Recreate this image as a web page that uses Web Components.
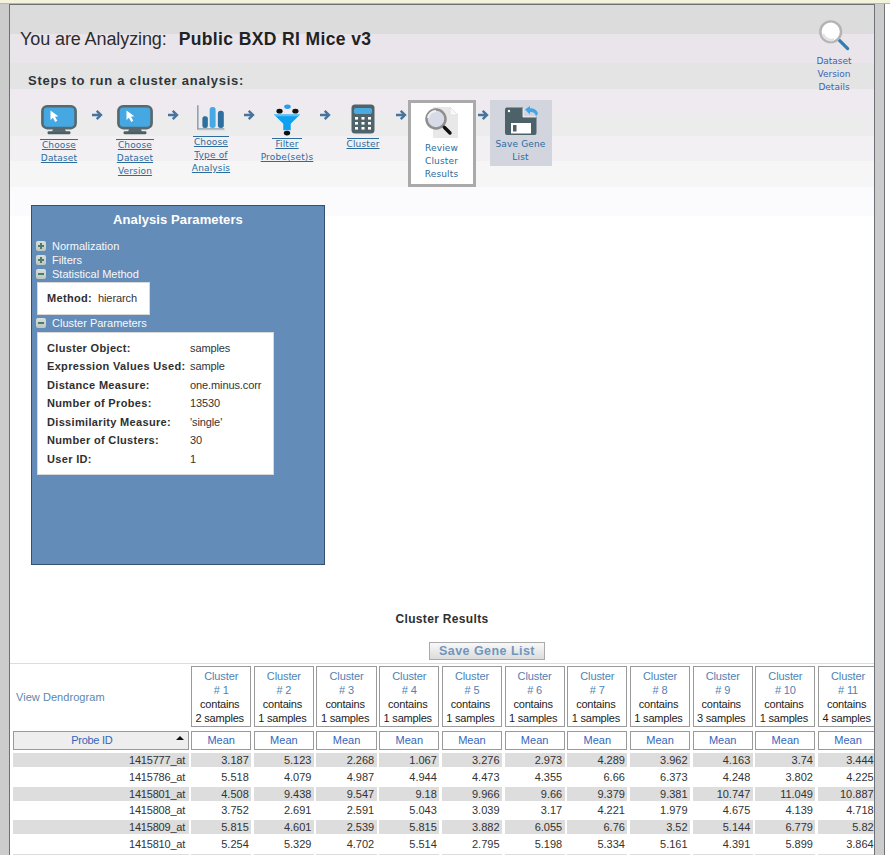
<!DOCTYPE html>
<html><head><meta charset="utf-8"><title>Cluster analysis</title>
<style>
html,body{margin:0;padding:0;background:#fff;}
body{font-family:"Liberation Sans",Arial,sans-serif;width:890px;height:855px;overflow:hidden;}
</style></head>
<body>
<x-app>
  <x-head slot="head"></x-head>
  <x-panel slot="panel" title-text="Analysis Parameters"></x-panel>
  <x-results slot="results"></x-results>
</x-app>

<script>
const ICONS = {
monitor:`<svg width="36" height="32" viewBox="0 0 38 32"><rect x="1.5" y="1.5" width="35" height="23" rx="5" fill="#46a8e2" stroke="#56696f" stroke-width="2.8"/><path d="M10 6l0 10 2.6-2.4 2.4 4.4 2.2-1.2-2.4-4.2 3.5-.6z" fill="#fff"/><path d="M13 25h12l1.5 3.5h-15z" fill="#56696f"/><rect x="7" y="28" width="24" height="3" rx="1" fill="#4c5f66"/></svg>`,
chart:`<svg width="31" height="30" viewBox="0 0 34 30"><path d="M2 1v26h29" fill="none" stroke="#8b9ba8" stroke-width="1.6"/><path d="M2.5 28h29" stroke="#c6ced4" stroke-width="1"/><rect x="7" y="13" width="6" height="13" rx="2.5" fill="#2e6f9f"/><rect x="15" y="3" width="6.5" height="23" rx="3" fill="#47a9e4"/><rect x="24" y="7" width="6.5" height="19" rx="3" fill="#2e6f9f"/></svg>`,
funnel:`<svg width="28" height="34" viewBox="0 0 30 34"><ellipse cx="15.500" cy="2.800" rx="3.500" ry="2.300" fill="#2b9bef"/><ellipse cx="7" cy="7.500" rx="3.300" ry="2.600" fill="#111"/><ellipse cx="24" cy="7.500" rx="3.300" ry="2.600" fill="#111"/><path d="M1 11h28l-10 10v7h-8v-7z" fill="#10a0f2"/><path d="M1 11h28l-2 2H3z" fill="#5cc0f6"/><ellipse cx="15" cy="31" rx="3.400" ry="2.600" fill="#111"/></svg>`,
calc:`<svg width="24" height="30" viewBox="0 0 24 30"><rect x=".5" y=".5" width="23" height="29" rx="3.500" fill="#50636a"/><rect x="3" y="4" width="18" height="6" rx="2" fill="#4aaae2"/><g fill="#fff"><rect x="4" y="13" width="3" height="2.600"/><rect x="10.500" y="13" width="3" height="2.600"/><rect x="17" y="13" width="3" height="2.600"/><rect x="4" y="18" width="3" height="2.600"/><rect x="10.500" y="18" width="3" height="2.600"/><rect x="17" y="18" width="3" height="2.600"/><rect x="4" y="23" width="3" height="2.600"/><rect x="10.500" y="23" width="3" height="2.600"/><rect x="17" y="23" width="3" height="2.600"/></g></svg>`,
review:`<svg width="36" height="33" viewBox="0 0 36 33"><path d="M9 1h17l8 8v23H9z" fill="#e8e8e8"/><path d="M26 1l8 8h-8z" fill="#f8f8f8" stroke="#d8d8d8" stroke-width=".6"/><circle cx="12" cy="13" r="9.500" fill="#d7dbe8" stroke="#8f8f8f" stroke-width="2.500"/><path d="M4 12a8 8 0 0 1 8-7" fill="none" stroke="#f2f2f2" stroke-width="2"/><path d="M19 20l7 7" stroke="#5d5d5d" stroke-width="2.500"/><path d="M20.500 21.500l5.500 5.500" stroke="#111" stroke-width="3.400" stroke-linecap="round"/></svg>`,
save:`<svg width="34" height="31" viewBox="0 0 34 31"><path d="M1 4.500a2 2 0 0 1 2-2h16v9.500h13.500v16a2 2 0 0 1-2 2H3a2 2 0 0 1-2-2z" fill="#4d6169"/><circle cx="5" cy="6" r="1.200" fill="#fff"/><rect x="7" y="18" width="20" height="10.500" fill="#fff"/><rect x="9" y="20" width="3.500" height="6.500" fill="#4d6169"/><path d="M21 4.500l5-3.500v2.200c4 .1 7 1.700 8 5.300l-2 3c-.5-3-2.500-4.500-6-4.400v2.300z" fill="#42a5e6"/><path d="M19 3v9h13" fill="none" stroke="#fff" stroke-width=".8"/></svg>`,
lens:`<svg width="32" height="32" viewBox="0 0 34 34"><path d="M21 21l10 10" stroke="#8b8b8b" stroke-width="2"/><path d="M22.500 22.500l9 9" stroke="#2f7fb2" stroke-width="3.400" stroke-linecap="round"/><circle cx="13.500" cy="13.500" r="11" fill="#fff" stroke="#b4b4b4" stroke-width="2.600"/><path d="M5 16a10 10 0 0 0 12 6" fill="none" stroke="#e2e2e2" stroke-width="3"/></svg>`,
arrow:`<svg width="12" height="12" viewBox="0 0 12 12"><path d="M1 6h8M5.700 1.800L10 6l-4.300 4.200" fill="none" stroke="#47749f" stroke-width="2.400"/></svg>`
};

class Base extends HTMLElement{
  render(html){ if(!this.shadowRoot) this.attachShadow({mode:'open'}); this.shadowRoot.innerHTML = html; }
}

customElements.define('x-app', class extends Base{
  connectedCallback(){ this.render(`<style>
    :host{display:block;width:890px;height:855px;overflow:hidden;background:#fff;}
    .top{height:3px;background:#f3f3dc;border-bottom:1px solid #b9b9a0;}
    .frame{display:flex;width:885px;height:851px;background:#cccccc;border-right:1px solid #70767a;box-sizing:border-box;padding:0 9px;}
    .main{flex:1;min-width:0;border-left:1px solid #6b7176;border-right:1px solid #6b7176;border-top:1px solid #6b7176;overflow:hidden;
      background:linear-gradient(#dcdcdc 0 29px,#e9e5eb 29px 58px,#e4e4e4 58px 84px,#eeeaf0 84px 109px,#ececec 109px 131px,#f3f0f4 131px 156px,#f6f6f6 156px 182px,#fbfafd 182px 211px,#fff 211px);}
    </style>
    <div class="top"></div>
    <div class="frame"><div class="main"><slot name="head"></slot><slot name="panel"></slot><slot name="results"></slot></div></div>`); }
});

customElements.define('x-step', class extends Base{
  connectedCallback(){
    const lines=(this.getAttribute('label')||'').split('|');
    const plain=this.hasAttribute('plain');
    this.render(`<style>
      :host{display:flex;flex-direction:column;align-items:center;box-sizing:border-box;width:var(--w,56px);padding-top:var(--pt,4px);}
      .ic{display:block;height:var(--ih,32px);}
      svg{display:block;}
      .ln{margin-top:var(--gap,3px);width:var(--lw,38px);height:1px;background:#2a6c9e;}
      .lb{margin-top:${plain?'var(--gap,3px)':'-1px'};text-align:center;font-family:"DejaVu Sans",Verdana,sans-serif;font-size:9px;line-height:13px;letter-spacing:.15px;color:#2a6c9e;white-space:nowrap;}
      a{color:inherit;${plain?'text-decoration:none;':'text-decoration:underline;'}}
    </style><div class="ic">${ICONS[this.getAttribute('icon')]}</div>${plain?'':'<div class="ln"></div>'}<div class="lb">${lines.map(l=>`<a href="#">${l}</a>`).join('<br>')}</div>`);
  }
});

customElements.define('x-arrow', class extends Base{
  connectedCallback(){ this.render(`<style>:host{display:flex;justify-content:center;width:var(--w,20px);padding:9px 0 0 var(--pl,0);box-sizing:border-box;}svg{display:block;}</style>${ICONS.arrow}`); }
});

customElements.define('x-head', class extends Base{
  connectedCallback(){ this.render(`<style>
    :host{display:block;height:200px;position:relative;color:#222;}
    .bar{display:flex;justify-content:space-between;}
    .left{padding:23px 0 0 10px;}
    h1{margin:0;font-size:18px;line-height:22px;font-weight:400;color:#2c2c2c;display:flex;letter-spacing:-.1px;}
    h1 b{margin-left:12px;letter-spacing:.38px;font-size:17.500px;color:#222;}
    h2{margin:23px 0 0 8px;font-size:13px;line-height:16px;font-weight:700;letter-spacing:.75px;color:#2f3438;}
    .steps{display:flex;align-items:flex-start;margin:11px 0 0 11px;}
    .review{--w:68px;--pt:3px;--gap:3px;border:3px solid #aaa;background:#fff;height:87px;box-sizing:border-box;--ih:33px;}
    .review,.save{flex:none;}
    .save{--w:62px;--pt:5px;--gap:2px;--ih:31px;background:#d2d4de;height:66px;}
    .dd{margin:14px 10px 0 0;width:60px;display:flex;flex-direction:column;align-items:center;font-family:"DejaVu Sans",Verdana,sans-serif;font-size:9px;line-height:13px;text-align:center;color:#3f62b5;}
    .dd svg{display:block;margin-bottom:4px;}
  </style>
  <div class="bar">
    <div class="left">
      <h1><span>You are Analyzing:</span><b>Public BXD RI Mice v3</b></h1>
      <h2>Steps to run a cluster analysis:</h2>
      <div class="steps">
        <x-step icon="monitor" label="Choose|Dataset" style="--pt:4px;--gap:3px;--lw:38px"></x-step>
        <x-arrow></x-arrow>
        <x-step icon="monitor" label="Choose|Dataset|Version" style="--pt:4px;--gap:3px;--lw:38px"></x-step>
        <x-arrow></x-arrow>
        <x-step icon="chart" label="Choose|Type of|Analysis" style="--pt:3px;--ih:30px;--gap:3px;--lw:36px"></x-step>
        <x-arrow></x-arrow>
        <x-step icon="funnel" label="Filter|Probe(set)s" style="--pt:3px;--ih:34px;--gap:1px;--lw:30px"></x-step>
        <x-arrow></x-arrow>
        <x-step icon="calc" label="Cluster" style="--pt:4px;--ih:30px;--gap:4px;--lw:32px"></x-step>
        <x-arrow style="--w:16.500px;--pl:4px"></x-arrow>
        <x-step class="review" icon="review" label="Review|Cluster|Results" plain></x-step>
        <x-arrow style="--w:14px"></x-arrow>
        <x-step class="save" icon="save" label="Save Gene|List" plain></x-step>
      </div>
    </div>
    <div class="dd">${ICONS.lens}<span>Dataset<br>Version<br>Details</span></div>
  </div>`); }
});

customElements.define('x-node', class extends Base{
  connectedCallback(){
    const open=this.hasAttribute('open');
    this.render(`<style>
      :host{display:block;}
      .row{display:flex;align-items:center;height:14px;margin-left:4px;font-size:11px;color:#fff;opacity:.95;}
      .b{width:10px;height:10px;border-radius:2px;background:linear-gradient(#dfe5dd,#c2cbc3);position:relative;margin-right:6px;flex:none;}
      .b::before{content:"";position:absolute;left:2px;right:2px;top:4px;height:2px;background:#4f7a66;}
      .p::after{content:"";position:absolute;top:2px;bottom:2px;left:4px;width:2px;background:#4f7a66;}
    </style><div class="row"><span class="b ${open?'':'p'}"></span><span>${this.getAttribute('label')}</span></div><slot></slot>`);
  }
});

customElements.define('x-kv', class extends Base{
  connectedCallback(){
    const rows=JSON.parse(this.getAttribute('rows'));
    const w=this.getAttribute('w'), k=this.getAttribute('k');
    this.render(`<style>
      :host{display:block;margin:1px 0 0 5px;width:${w}px;box-sizing:border-box;background:#fff;border:1px solid #d8d8d8;padding:var(--pv,6px) 0;}
      .g{display:grid;grid-template-columns:${k}px auto;padding-left:9px;font-size:11px;color:#333;grid-auto-rows:18.500px;align-items:center;white-space:nowrap;}
      b{color:#2f2f2f;letter-spacing:.33px;font-weight:700;}
      span{letter-spacing:-.1px;}
    </style><div class="g">${rows.map(r=>`<b>${r[0]}</b><span>${r[1]}</span>`).join('')}</div>`);
  }
});

customElements.define('x-panel', class extends Base{
  connectedCallback(){
    this.render(`<style>
      :host{display:block;box-sizing:border-box;margin:0 0 0 21px;width:294px;height:360px;background:#648cb8;border:1px solid #34506e;}
      h3{margin:5px 0 0;font-size:13px;line-height:18px;text-align:center;color:#fff;font-weight:700;letter-spacing:.1px;}
      .tree{margin-top:10px;}
      .gap{height:1px;}
    </style>
    <h3>${this.getAttribute('title-text')}</h3>
    <div class="tree">
      <x-node label="Normalization"></x-node>
      <x-node label="Filters"></x-node>
      <x-node label="Statistical Method" open>
        <x-kv w="113" k="51" style="--pv:6px" rows='[["Method:","hierarch"]]'></x-kv>
      </x-node>
      <div class="gap"></div>
      <x-node label="Cluster Parameters" open>
        <x-kv w="237" k="143" style="--pv:5.750px;margin-top:2px" rows='[["Cluster Object:","samples"],["Expression Values Used:","sample"],["Distance Measure:","one.minus.corr"],["Number of Probes:","13530"],["Dissimilarity Measure:","&#39;single&#39;"],["Number of Clusters:","30"],["User ID:","1"]]'></x-kv>
      </x-node>
    </div>`);
  }
});

customElements.define('x-results', class extends Base{
  connectedCallback(){
    const samples=[2,1,1,1,1,1,1,1,3,1,4];
    const data=[
     ['1415777_at','3.187 5.123 2.268 1.067 3.276 2.973 4.289 3.962 4.163 3.74 3.444'],
     ['1415786_at','5.518 4.079 4.987 4.944 4.473 4.355 6.66 6.373 4.248 3.802 4.225'],
     ['1415801_at','4.508 9.438 9.547 9.18 9.966 9.66 9.379 9.381 10.747 11.049 10.887'],
     ['1415808_at','3.752 2.691 2.591 5.043 3.039 3.17 4.221 1.979 4.675 4.139 4.718'],
     ['1415809_at','5.815 4.601 2.539 5.815 3.882 6.055 6.76 3.52 5.144 6.779 5.82'],
     ['1415810_at','5.254 5.329 4.702 5.514 2.795 5.198 5.334 5.161 4.391 5.899 3.864'],
     ['','           ']
    ];
    this.render(`<style>
      :host{display:block;font-size:11px;color:#222;}
      h4{margin:0;padding-top:47px;text-align:center;font-size:12px;line-height:14px;font-weight:700;color:#2f2f2f;letter-spacing:.33px;}
      .bw{display:flex;justify-content:center;margin-top:16px;padding-left:90px;}
      button{all:unset;box-sizing:border-box;width:116px;height:18px;border:1px solid #aaa;background:linear-gradient(#f8f8f8,#dcdcdc);color:#7096bc;font:700 12.500px/16px "Liberation Sans",Arial,sans-serif;letter-spacing:.45px;text-align:center;}
      .wrap{margin-top:3px;border-top:1px solid #ddd;padding:2px 0 0 3px;overflow:hidden;}
      .r{display:grid;grid-template-columns:175.600px repeat(11,60.200px);column-gap:2.500px;width:max-content;}
      .hd{height:61px;margin-bottom:4px;}
      .hd .dn{display:flex;align-items:center;padding-left:3px;color:#5a87b0;letter-spacing:.05px;}
      .hd .c{border:1px solid #9a9a9a;background:#fff;box-sizing:border-box;text-align:center;line-height:14px;padding-top:2px;letter-spacing:-.12px;}
      .hd a,.mn a{text-decoration:none;}
      .hd a{color:#4f82b4;}
      .hd em{font-style:normal;color:#1c1c1c;display:block;margin-left:-3px;letter-spacing:-.2px;}
      .mn{height:18.500px;margin-bottom:3.500px;}
      .mn>div{border:1px solid #9a9a9a;box-sizing:border-box;text-align:center;line-height:16px;background:#fff;}
      .mn a{color:#3565bb;}
      .mn .pid{background:#eeeeee;position:relative;padding-right:18px;letter-spacing:-.3px;}
      .pid i{position:absolute;right:4px;top:4px;width:0;height:0;border-left:4px solid transparent;border-right:4px solid transparent;border-bottom:4px solid #111;}
      .d{height:14px;margin-bottom:2.750px;}
      .d>div{text-align:right;padding-right:2.500px;line-height:14px;color:#333;white-space:nowrap;overflow:hidden;}
      .d.z>div{background:#dddddd;}
      .d>div:first-child{padding-right:3.500px;letter-spacing:-.2px;}
      .d>div:last-child{padding-right:4.500px;}
    </style>
    <h4>Cluster Results</h4>
    <div class="bw"><button type="button">Save Gene List</button></div>
    <div class="wrap">
      <div class="r hd"><div class="dn"><a href="#" style="color:inherit">View Dendrogram</a></div>
      ${samples.map((s,i)=>`<div class="c"><a href="#">Cluster<br># ${i+1}</a><em>contains<br>${s} samples</em></div>`).join('')}</div>
      <div class="r mn"><div class="pid"><a href="#">Probe ID</a><i></i></div>${samples.map(()=>`<div><a href="#">Mean</a></div>`).join('')}</div>
      ${data.map((d,i)=>`<div class="r d ${i%2?'':'z'}"><div>${d[0]}</div>${d[1].split(' ').slice(0,11).map(v=>`<div>${v}</div>`).join('')}</div>`).join('')}
    </div>`);
  }
});
</script>
</body></html>
